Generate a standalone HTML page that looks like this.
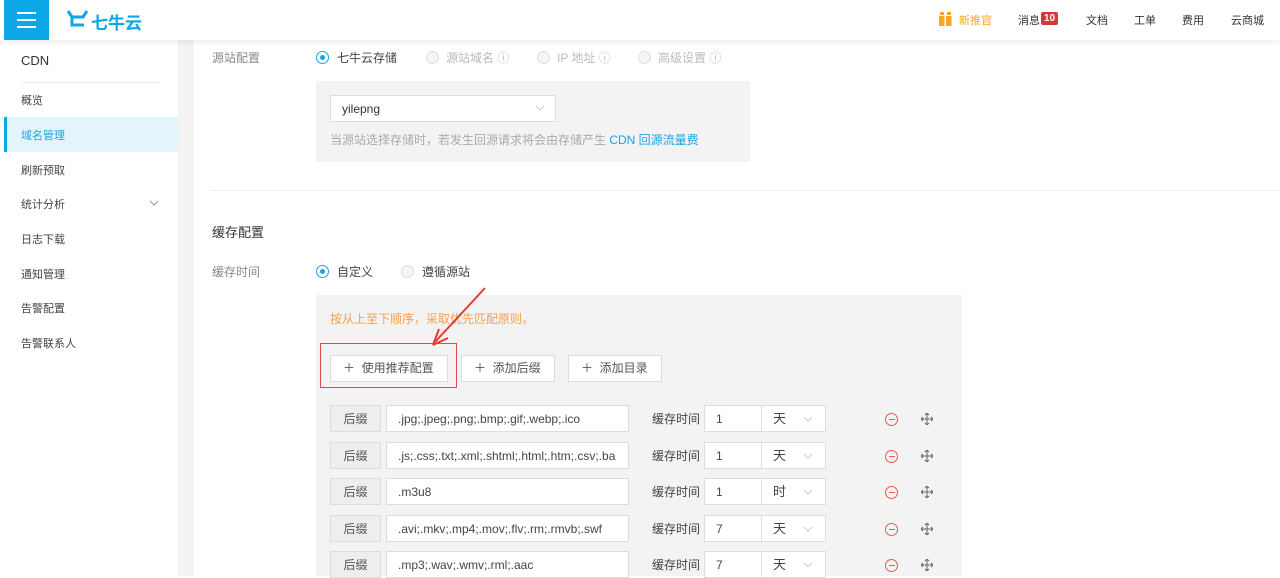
<!DOCTYPE html>
<html><head><meta charset="utf-8"><style>
*{box-sizing:border-box;margin:0;padding:0}
body{width:1280px;height:576px;overflow:hidden;background:#fff;font-family:"Liberation Sans","Noto Sans CJK SC",sans-serif;font-size:12px;color:#333;position:relative}
.a{position:absolute}
.top{left:0;top:0;width:1280px;height:40px;background:#fff;box-shadow:0 2px 6px rgba(0,0,0,.08);z-index:5}
.hb{left:4px;top:0;width:45px;height:40px;background:#0ba7e6}
.hb i{position:absolute;left:13px;width:19px;height:2px;background:#fff}
.side{left:0;top:40px;width:178px;height:536px;background:#fff}
.strip{left:178px;top:40px;width:16px;height:536px;background:#f3f3f3}
.nav{left:21px;font-size:11px;color:#444}
.radio{width:13px;height:13px;border-radius:50%;border:1px solid #ddd;background:#f5f5f5}
.radio.on{border:1px solid #1aa3e6;background:#fff}
.radio.on:after{content:"";position:absolute;left:3px;top:3px;width:5px;height:5px;border-radius:50%;background:#1aa3e6}
.gray{color:#bbb}
.box{background:#f3f3f3}
.btn{height:27px;border:1px solid #ddd;background:#fff;font-size:12px;color:#555;line-height:25px;padding-left:12px}
.inp{height:27px;border:1px solid #ddd;background:#fff;line-height:26px;padding-left:11px;font-size:12px;color:#444}
.lab{height:27px;border:1px solid #ddd;background:#eee;line-height:26px;text-align:center;color:#555}
.mi{width:13px;height:13px;border:1.3px solid #e55;border-radius:50%}
.mi:after{content:"";position:absolute;left:2.5px;top:5px;width:6px;height:1.3px;background:#e55}
</style></head><body>
<div class="a top">
 <div class="a hb"><i style="top:12px"></i><i style="top:19px"></i><i style="top:26px"></i></div>
 <svg class="a" style="left:67px;top:10px" width="22" height="18" viewBox="0 0 22 18"><path d="M1 1 L5 7 L16 7 L20 1 M5 7 L5 15 L17 15" fill="none" stroke="#0ba7e6" stroke-width="3"/></svg>
 <div class="a" style="left:91px;top:9px;font-size:17px;color:#0ba7e6;font-weight:bold">七牛云</div>
 <svg class="a" style="left:939px;top:12px" width="13" height="14"><rect x="0" y="4" width="5.5" height="10" fill="#f5a623"/><rect x="7" y="4" width="5.5" height="10" fill="#f5a623"/><rect x="1" y="0" width="4" height="3" fill="#f5a623"/><rect x="8" y="0" width="4" height="3" fill="#f5a623"/></svg>
 <div class="a" style="left:959px;top:12px;color:#f5a623;font-size:11px">新推官</div>
 <div class="a" style="left:1018px;top:12px;font-size:11px">消息</div>
 <div class="a" style="left:1041px;top:12px;width:17px;height:13px;background:#d9363e;color:#fff;font-size:10px;font-weight:bold;text-align:center;line-height:13px;border-radius:2px">10</div>
 <div class="a" style="left:1086px;top:12px;font-size:11px">文档</div>
 <div class="a" style="left:1134px;top:12px;font-size:11px">工单</div>
 <div class="a" style="left:1182px;top:12px;font-size:11px">费用</div>
 <div class="a" style="left:1231px;top:12px;font-size:11px">云商城</div>
</div>
<div class="a side"></div><div class="a strip"></div>
<div class="a" style="left:21px;top:53px;font-size:13px;color:#333">CDN</div>
<div class="a" style="left:21px;top:82px;width:139px;height:1px;background:#eee"></div>
<div class="a nav" style="top:92px">概览</div>
<div class="a" style="left:4px;top:117px;width:174px;height:35px;background:#e3f4fc"></div>
<div class="a" style="left:4px;top:117px;width:3px;height:35px;background:#0ba7e6"></div>
<div class="a nav" style="top:127px;color:#1aa3e6">域名管理</div>
<div class="a nav" style="top:162px">刷新预取</div>
<div class="a nav" style="top:196px">统计分析</div>
<svg class="a" style="left:149px;top:200px" width="10" height="6"><path d="M1 1 L5 5 L9 1" stroke="#999" fill="none"/></svg>
<div class="a nav" style="top:231px">日志下载</div>
<div class="a nav" style="top:266px">通知管理</div>
<div class="a nav" style="top:300px">告警配置</div>
<div class="a nav" style="top:335px">告警联系人</div>

<div class="a" style="left:212px;top:49px;color:#888">源站配置</div>
<div class="a radio on" style="left:316px;top:51px"></div>
<div class="a" style="left:337px;top:49px;color:#444">七牛云存储</div>
<div class="a radio" style="left:426px;top:51px"></div><div class="a gray" style="left:446px;top:49px">源站域名 ⓘ</div>
<div class="a radio" style="left:537px;top:51px"></div><div class="a gray" style="left:557px;top:49px">IP 地址 ⓘ</div>
<div class="a radio" style="left:638px;top:51px"></div><div class="a gray" style="left:658px;top:49px">高级设置 ⓘ</div>
<div class="a box" style="left:316px;top:81px;width:434px;height:81px"></div>
<div class="a inp" style="left:330px;top:95px;width:226px;color:#333">yilepng</div>
<svg class="a" style="left:535px;top:105px" width="10" height="6"><path d="M1 1 L5 5 L9 1" stroke="#ccc" fill="none"/></svg>
<div class="a" style="left:330px;top:131px;color:#aaa">当源站选择存储时，若发生回源请求将会由存储产生 <span style="color:#1aa3e6">CDN 回源流量费</span></div>
<div class="a" style="left:210px;top:190px;width:1070px;height:1px;background:#eee"></div>

<div class="a" style="left:212px;top:222px;font-size:13px;color:#333">缓存配置</div>
<div class="a" style="left:212px;top:263px;color:#888">缓存时间</div>
<div class="a radio on" style="left:316px;top:265px"></div><div class="a" style="left:337px;top:263px;color:#444">自定义</div>
<div class="a radio" style="left:401px;top:265px"></div><div class="a" style="left:422px;top:263px;color:#444">遵循源站</div>
<div class="a box" style="left:316px;top:295px;width:646px;height:281px"></div>
<div class="a" style="left:330px;top:310px;color:#f5a04a">按从上至下顺序，采取优先匹配原则。</div>
<div class="a" style="left:320px;top:343px;width:137px;height:45px;border:1.5px solid #e54848"></div>
<div class="a btn" style="left:330px;top:355px;width:118px">＋ &nbsp;使用推荐配置</div>
<div class="a btn" style="left:461px;top:355px;width:94px">＋ &nbsp;添加后缀</div>
<div class="a btn" style="left:568px;top:355px;width:94px">＋ &nbsp;添加目录</div>
<svg class="a" style="left:425px;top:285px" width="65" height="70"><path d="M60 3 L10 57" stroke="#e53935" stroke-width="2"/><path d="M8 60 L14 44 M8 60 L23 53" stroke="#e53935" stroke-width="2" fill="none"/></svg>

<div id="rows"></div>
<script>
var d=[[".jpg;.jpeg;.png;.bmp;.gif;.webp;.ico","1","天"],[".js;.css;.txt;.xml;.shtml;.html;.htm;.csv;.ba","1","天"],[".m3u8","1","时"],[".avi;.mkv;.mp4;.mov;.flv;.rm;.rmvb;.swf","7","天"],[".mp3;.wav;.wmv;.rml;.aac","7","天"]];
var h="";d.forEach(function(r,i){var y=405+i*36.5;
h+='<div class="a lab" style="left:330px;top:'+y+'px;width:51px">后缀</div>'+
'<div class="a inp" style="left:386px;top:'+y+'px;width:243px">'+r[0]+'</div>'+
'<div class="a" style="left:652px;top:'+(y+5)+'px;color:#444">缓存时间</div>'+
'<div class="a inp" style="left:704px;top:'+y+'px;width:58px">'+r[1]+'</div>'+
'<div class="a inp" style="left:761px;top:'+y+'px;width:65px;font-size:13px">'+r[2]+'</div>'+
'<svg class="a" style="left:803px;top:'+(y+11)+'px" width="10" height="6"><path d="M1 1 L5 5 L9 1" stroke="#ccc" fill="none"/></svg>'+
'<div class="a mi" style="left:885px;top:'+(y+8)+'px"></div>'+
'<svg class="a" style="left:921px;top:'+(y+8)+'px" width="12" height="12"><path d="M6 0V12M0 6H12M4 2L6 0L8 2M4 10L6 12L8 10M2 4L0 6L2 8M10 4L12 6L10 8" stroke="#666" fill="none"/></svg>';});
document.getElementById("rows").innerHTML=h;
</script>
</body></html>
